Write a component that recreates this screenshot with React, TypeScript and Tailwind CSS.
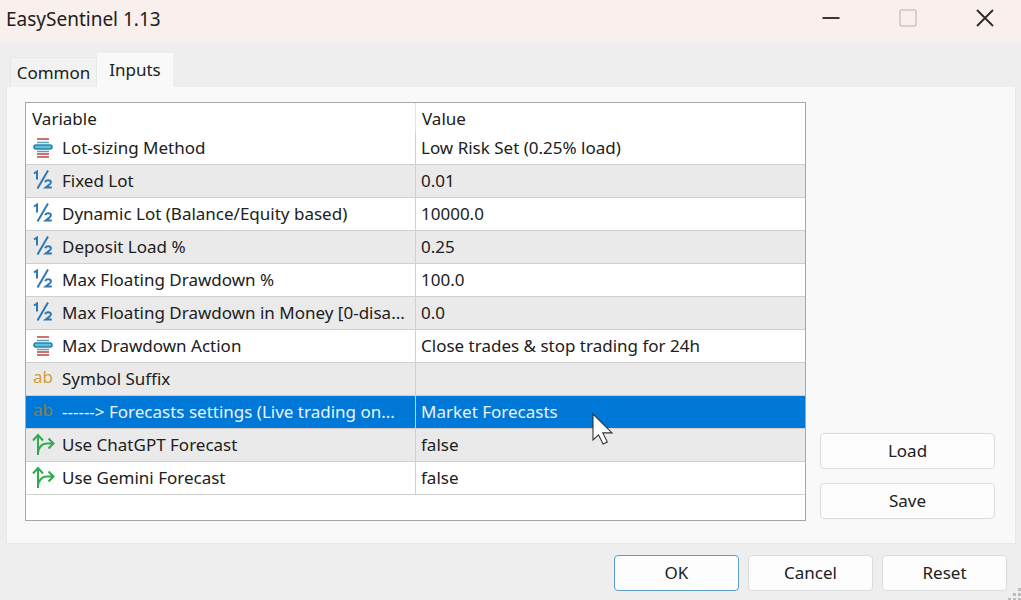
import React, { useState } from 'react';

type RowKind = 'enum' | 'number' | 'text' | 'bool';

interface InputRow {
    kind: RowKind;
    name: string;
    value: string;
}

const rows: InputRow[] = [
    { kind: 'enum', name: 'Lot-sizing Method', value: 'Low Risk Set (0.25% load)' },
    { kind: 'number', name: 'Fixed Lot', value: '0.01' },
    { kind: 'number', name: 'Dynamic Lot (Balance/Equity based)', value: '10000.0' },
    { kind: 'number', name: 'Deposit Load %', value: '0.25' },
    { kind: 'number', name: 'Max Floating Drawdown %', value: '100.0' },
    { kind: 'number', name: 'Max Floating Drawdown in Money [0-disa...', value: '0.0' },
    { kind: 'enum', name: 'Max Drawdown Action', value: 'Close trades & stop trading for 24h' },
    { kind: 'text', name: 'Symbol Suffix', value: '' },
    { kind: 'text', name: '------> Forecasts settings (Live trading on...', value: 'Market Forecasts' },
    { kind: 'bool', name: 'Use ChatGPT Forecast', value: 'false' },
    { kind: 'bool', name: 'Use Gemini Forecast', value: 'false' },
];

function RowIcon({ kind, selected }: { kind: RowKind; selected: boolean }) {
    if (kind === 'enum') {
        return (
            <svg width="22" height="22" viewBox="0 0 22 22" fill="none" aria-hidden="true">
                <path d="M5 2h12M5 17h12M5 20h12" stroke="#cf6f70" strokeWidth="1.8" />
                <path d="M5 5.5h12M5 14.5h12" stroke="#5d9fb8" strokeWidth="1.4" />
                <rect x="2" y="8" width="18" height="4" rx="2" fill="#62c0dd" stroke="#2783a8" strokeWidth="1.6" />
            </svg>
        );
    }
    if (kind === 'number') {
        return (
            <svg width="22" height="22" viewBox="0 0 22 22" fill="none" stroke="#2f78b3" strokeWidth="2" aria-hidden="true">
                <path d="M2 3.5 5 1.5v8M16 .5 5.5 18.5" />
                <path d="M13.3 12.2c.3-1.3 1.4-1.9 2.8-1.9 1.7 0 2.8.8 2.8 2.1 0 1.6-2.6 2.8-5.3 5.2h6.2" />
            </svg>
        );
    }
    if (kind === 'text') {
        return <span aria-hidden="true" className={`pb-1 text-[17px] leading-5 ${selected ? 'text-[#82804f]' : 'text-[#d09d3c]'}`}>ab</span>;
    }
    return (
        <svg width="24" height="24" viewBox="0 0 24 24" fill="none" stroke="#2fab4c" strokeWidth="2" aria-hidden="true">
            <path d="M7 22V2M2 7.5l5-5.5 5 5.5" />
            <path d="M7 20.5c0-6 4-10 9-10h6M17.5 5.5l5 5-5 5" />
        </svg>
    );
}

function Pointer() {
    return (
        <svg className="absolute left-[175px] top-4 z-10" width="24" height="36" viewBox="0 0 24 36" aria-hidden="true">
            <path d="M2 2v26l5.5-5.2 4.6 9.2 4.2-2-4.5-9.1H21z" fill="#fff" stroke="#333" strokeWidth="1.1" />
        </svg>
    );
}

function DialogButton({ label, className }: { label: string; className: string }) {
    return (
        <button type="button" className={`h-9 rounded border bg-[#fdfdfd] ${className}`}>
            {label}
        </button>
    );
}

export default function App() {
    const [selected, setSelected] = useState(8);

    return (
        <div className="relative flex min-h-screen flex-col bg-[#eeeeee] text-[17px] leading-6 text-[#202020]" style={{ fontFamily: '"Noto Sans", "Open Sans", sans-serif' }}>
            <header className="flex h-[42px] items-center justify-between bg-[#f9efed] pl-1.5">
                <h1 className="pb-1 text-[19px]">EasySentinel 1.13</h1>
                <div className="flex gap-[5px] pb-1.5">
                    <button type="button" aria-label="Minimize" className="flex w-[72px] justify-center">
                        <svg width="20" height="20" viewBox="0 0 20 20" stroke="#3b3335" strokeWidth="2"><path d="M1.5 10h17" /></svg>
                    </button>
                    <button type="button" aria-label="Maximize" disabled className="flex w-[72px] justify-center">
                        <svg width="20" height="20" viewBox="0 0 20 20" fill="none" stroke="#cdc5c4" strokeWidth="1.5"><rect x="2" y="2" width="16" height="16" rx="2" /></svg>
                    </button>
                    <button type="button" aria-label="Close" className="flex w-[72px] justify-center">
                        <svg width="20" height="20" viewBox="0 0 20 20" stroke="#2e282a" strokeWidth="1.8"><path d="m2 2 16 16M18 2 2 18" /></svg>
                    </button>
                </div>
            </header>

            {/* Tabs */}
            <div role="tablist" className="flex items-end px-2.5 pt-[11px]">
                <button type="button" role="tab" aria-selected="false" className="h-[30px] w-[87px] border border-b-0 border-[#e8e8e8] bg-[#f2f2f2]">Common</button>
                <button type="button" role="tab" aria-selected="true" className="h-[34px] w-[76px] bg-[#f9f9f9]">Inputs</button>
            </div>

            <main className="mr-[5px] ml-1.5 flex flex-1 gap-3.5 border border-t-0 border-[#e8e8e8] bg-[#f9f9f9] pt-[15px] pr-5 pb-[22px] pl-[18px]">
                <div className="flex-1 border border-[#a6a8a8] bg-white">
                    <table className="w-full table-fixed border-collapse text-left">
                        <thead>
                            <tr className="h-7 border-b border-white">
                                <th className="w-1/2 border-r border-[#e2e2e2] p-0 pt-1 pl-1.5 font-normal">Variable</th>
                                <th className="w-1/2 p-0 pt-1 pl-1.5 font-normal">Value</th>
                            </tr>
                        </thead>
                        <tbody>
                            {rows.map((row, idx) => (
                                <tr
                                    key={row.name}
                                    onClick={() => setSelected(idx)}
                                    className={`h-[33px] border-b border-[#d0d0d0] ${idx === selected ? 'bg-[#0078d7] text-[#e8f4ff]' : idx % 2 ? 'bg-[#eaeaea]' : 'bg-white'}`}
                                >
                                    <td className="border-r border-[#d0d0d0] p-0">
                                        <div className="flex items-center">
                                            <span className="flex w-[34px] shrink-0 justify-center"><RowIcon kind={row.kind} selected={idx === selected} /></span>
                                            <span className="pl-0.5 whitespace-nowrap">{row.name}</span>
                                        </div>
                                    </td>
                                    <td className="relative p-0 pl-[5px]">
                                        {row.value}
                                        {idx === 8 && <Pointer />}
                                    </td>
                                </tr>
                            ))}
                        </tbody>
                    </table>
                </div>

                <aside className="flex w-[175px] flex-col justify-end gap-3.5 pb-0.5">
                    <DialogButton label="Load" className="border-[#dcdcdc]" />
                    <DialogButton label="Save" className="border-[#dcdcdc]" />
                </aside>
            </main>

            <footer className="flex justify-end gap-[9px] pt-[11px] pr-3.5 pb-[9px]">
                <DialogButton label="OK" className="w-[125px] border-[#5a9fc8]" />
                <DialogButton label="Cancel" className="w-[125px] border-[#dcdcdc]" />
                <DialogButton label="Reset" className="w-[125px] border-[#dcdcdc]" />
            </footer>

            {/* Resize grip */}
            <svg className="absolute right-0 bottom-0" width="14" height="12" viewBox="0 0 14 12" fill="#bcbcbc" aria-hidden="true">
                <path d="M11 0h3v3h-3zM11 5h3v3h-3zM6 5h3v3H6zM11 10h3v2h-3zM6 10h3v2H6zM1 10h3v2H1z" />
            </svg>
        </div>
    );
}
